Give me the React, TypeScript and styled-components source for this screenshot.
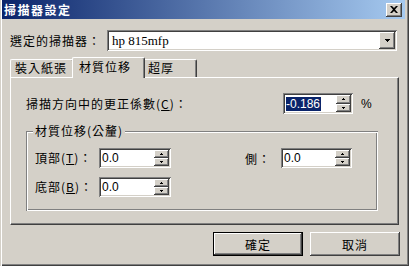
import React from "react";
import styled, { createGlobalStyle } from "styled-components";

const Global = createGlobalStyle`
  html, body { margin: 0; padding: 0; background: #D4D0C8; }
  body { font-family: "Noto Sans CJK TC", "Liberation Sans", sans-serif; font-size: 12px; color: #000; letter-spacing: 1px; }
`;

const FACE = "#D4D0C8";
const SHADOW = "#808080";
const DARK = "#404040";

const Window = styled.div`
  width: 409px;
  height: 266px;
  box-sizing: border-box;
  background: ${FACE};
  padding: 0 4px 4px 2px;
  box-shadow: inset 1px 0 ${FACE}, inset 2px 0 #fff, inset -1px -1px ${DARK}, inset -2px -2px ${SHADOW};
  display: flex;
  flex-direction: column;
`;

const TitleBar = styled.div`
  height: 19px;
  flex: none;
  background: linear-gradient(to right, #0a246a, #a6caf0);
  display: flex;
  align-items: center;
  justify-content: space-between;
  padding: 0 3px 0 2px;
`;

const TitleText = styled.span`
  color: #fff;
  font-weight: bold;
  font-size: 12px;
  line-height: 14px;
  letter-spacing: 1.5px;
`;

const raised = `
  background: ${FACE};
  box-shadow: inset -1px -1px ${DARK}, inset 1px 1px #fff, inset -2px -2px ${SHADOW}, inset 2px 2px ${FACE};
`;

const sunken = `
  background: #fff;
  box-shadow: inset 1px 1px ${SHADOW}, inset -1px -1px #fff, inset 2px 2px ${DARK}, inset -2px -2px ${FACE};
`;

const CloseButton = styled.div`
  ${raised}
  width: 16px;
  height: 14px;
  display: flex;
  align-items: center;
  justify-content: center;
`;

const Body = styled.div`
  flex: 1;
  display: flex;
  flex-direction: column;
  padding: 11px 0 0 8px;
`;

const ComboRow = styled.div`
  display: flex;
  align-items: center;
  height: 21px;
`;

const Label = styled.span<{ $w?: number }>`
  display: inline-block;
  white-space: nowrap;
  ${(p) => (p.$w ? `width: ${p.$w}px;` : "")}
  font-size: 12px;
  line-height: 14px;
`;

const Combo = styled.div`
  ${sunken}
  width: 290px;
  height: 21px;
  box-sizing: border-box;
  padding: 2px;
  display: flex;
  align-items: center;
`;

const ComboText = styled.span`
  flex: 1;
  padding-left: 3px;
  font-family: "Liberation Serif", serif;
  font-size: 13px;
  letter-spacing: 0;
`;

const DropButton = styled.div`
  ${raised}
  width: 16px;
  height: 17px;
  display: flex;
  align-items: center;
  justify-content: center;
`;

const TabStrip = styled.div`
  display: flex;
  align-items: flex-end;
  height: 20px;
  margin-top: 6px;
`;

const Tab = styled.div<{ $active?: boolean; $w: number }>`
  box-sizing: border-box;
  width: ${(p) => p.$w}px;
  height: ${(p) => (p.$active ? 21 : 18)}px;
  margin: ${(p) => (p.$active ? "0 -2px -1px -2px" : "0")};
  position: relative;
  z-index: ${(p) => (p.$active ? 1 : 0)};
  background: ${FACE};
  border-top: 1px solid #fff;
  border-left: 1px solid #fff;
  border-right: 1px solid ${DARK};
  box-shadow: inset -1px 0 ${SHADOW};
  border-radius: 2px 2px 0 0;
  padding: ${(p) => (p.$active ? "2px 0 0 6px" : "1px 0 0 4px")};
  font-size: 12px;
  line-height: 14px;
`;

const Panel = styled.div`
  box-sizing: border-box;
  width: 389px;
  height: 148px;
  border-top: 1px solid #fff;
  border-left: 1px solid #fff;
  border-right: 1px solid ${DARK};
  border-bottom: 1px solid ${DARK};
  box-shadow: inset -1px -1px ${SHADOW};
  padding: 15px 0 0 15px;
  display: flex;
  flex-direction: column;
`;

const FactorRow = styled.div`
  display: flex;
  align-items: center;
  height: 21px;
`;

const Spin = styled.div<{ $w: number; $h: number }>`
  ${sunken}
  box-sizing: border-box;
  width: ${(p) => p.$w}px;
  height: ${(p) => p.$h}px;
  padding: 2px;
  display: flex;
  align-items: stretch;
`;

const SpinValue = styled.div`
  flex: 1;
  display: flex;
  align-items: center;
  padding-left: 1px;
  font-family: "Liberation Sans", sans-serif;
  font-size: 12px;
  letter-spacing: 0;
`;

const Selected = styled.span`
  background: #0a246a;
  color: #fff;
  line-height: 14px;
  padding: 0 1px 0 0;
`;

const SpinButtons = styled.div`
  width: 15px;
  display: flex;
  flex-direction: column;
`;

const SpinBtn = styled.div`
  ${raised}
  flex: 1;
  display: flex;
  align-items: center;
  justify-content: center;
`;

const Percent = styled.span`
  margin-left: 8px;
  font-family: "Liberation Sans", sans-serif;
  font-size: 12px;
  letter-spacing: 0;
`;

const Group = styled.div`
  box-sizing: border-box;
  width: 352px;
  height: 80px;
  margin: 17px 0 0 0;
  padding: 17px 0 0 9px;
  box-shadow: inset 1px 1px ${SHADOW}, inset 2px 2px #fff, inset -1px -1px #fff, inset -2px -2px ${SHADOW};
  position: relative;
  display: flex;
  flex-direction: column;
  gap: 9px;
`;

const Legend = styled.span`
  padding: 0 2px;
  font-size: 12px;
  line-height: 14px;
  background: ${FACE};
  position: absolute;
  top: -7px;
  left: 7px;
`;

const GroupRow = styled.div`
  display: flex;
  align-items: center;
  height: 20px;
`;

const SideLabel = styled.span`
  margin-left: 74px;
  width: 36px;
  font-size: 12px;
`;

const ButtonRow = styled.div`
  display: flex;
  justify-content: flex-end;
  gap: 7px;
  padding-right: 5px;
  margin-top: 7px;
`;

const Button = styled.div<{ $default?: boolean; $w: number }>`
  box-sizing: border-box;
  width: ${(p) => p.$w}px;
  height: 24px;
  display: flex;
  align-items: center;
  justify-content: center;
  background: ${FACE};
  font-size: 12px;
  box-shadow: ${(p) =>
    p.$default
      ? `inset 0 0 0 1px #000, inset -2px -2px ${DARK}, inset 2px 2px #fff, inset -3px -3px ${SHADOW}`
      : `inset -1px -1px ${DARK}, inset 1px 1px #fff, inset -2px -2px ${SHADOW}, inset 2px 2px ${FACE}`};
`;

const Down = () => (
  <svg width="5" height="3" viewBox="0 0 5 3"><path d="M0 0h5v1H4v1H3v1H2V2H1V1H0z" fill="#000" /></svg>
);
const SmallUp = () => (
  <svg width="3" height="2" viewBox="0 0 3 2"><path d="M1 0h1v1h1v1H0V1h1z" fill="#000" /></svg>
);
const SmallDown = () => (
  <svg width="3" height="2" viewBox="0 0 3 2"><path d="M0 0h3v1H2v1H1V1H0z" fill="#000" /></svg>
);

const SpinBox: React.FC<{ w: number; h: number; children: React.ReactNode }> = ({ w, h, children }) => (
  <Spin $w={w} $h={h}>
    <SpinValue>{children}</SpinValue>
    <SpinButtons>
      <SpinBtn><SmallUp /></SpinBtn>
      <SpinBtn><SmallDown /></SpinBtn>
    </SpinButtons>
  </Spin>
);

export default function App() {
  return (
    <>
      <Global />
      <Window>
        <TitleBar>
          <TitleText>掃描器設定</TitleText>
          <CloseButton>
            <svg width="8" height="7" viewBox="0 0 8 7">
              <path d="M0 0h2l2 2 2-2h2L5 3.5 8 7H6L4 5 2 7H0l3-3.5z" fill="#000" />
            </svg>
          </CloseButton>
        </TitleBar>
        <Body>
          <ComboRow>
            <Label $w={97}>選定的掃描器：</Label>
            <Combo>
              <ComboText>hp 815mfp</ComboText>
              <DropButton>
                <Down />
              </DropButton>
            </Combo>
          </ComboRow>
          <TabStrip>
            <Tab $w={64}>裝入紙張</Tab>
            <Tab $w={73} $active>材質位移</Tab>
            <Tab $w={54}>超厚</Tab>
          </TabStrip>
          <Panel>
            <FactorRow>
              <Label $w={257}>掃描方向中的更正係數(<u>C</u>)：</Label>
              <SpinBox w={70} h={21}>
                <Selected>-0.186</Selected>
              </SpinBox>
              <Percent>%</Percent>
            </FactorRow>
            <Group>
              <Legend>材質位移(公釐)</Legend>
              <GroupRow>
                <Label $w={64}>頂部(<u>T</u>)：</Label>
                <SpinBox w={72} h={20}>0.0</SpinBox>
                <SideLabel>側：</SideLabel>
                <SpinBox w={71} h={20}>0.0</SpinBox>
              </GroupRow>
              <GroupRow>
                <Label $w={64}>底部(<u>B</u>)：</Label>
                <SpinBox w={72} h={20}>0.0</SpinBox>
              </GroupRow>
            </Group>
          </Panel>
          <ButtonRow>
            <Button $w={90} $default>確定</Button>
            <Button $w={90}>取消</Button>
          </ButtonRow>
        </Body>
      </Window>
    </>
  );
}
